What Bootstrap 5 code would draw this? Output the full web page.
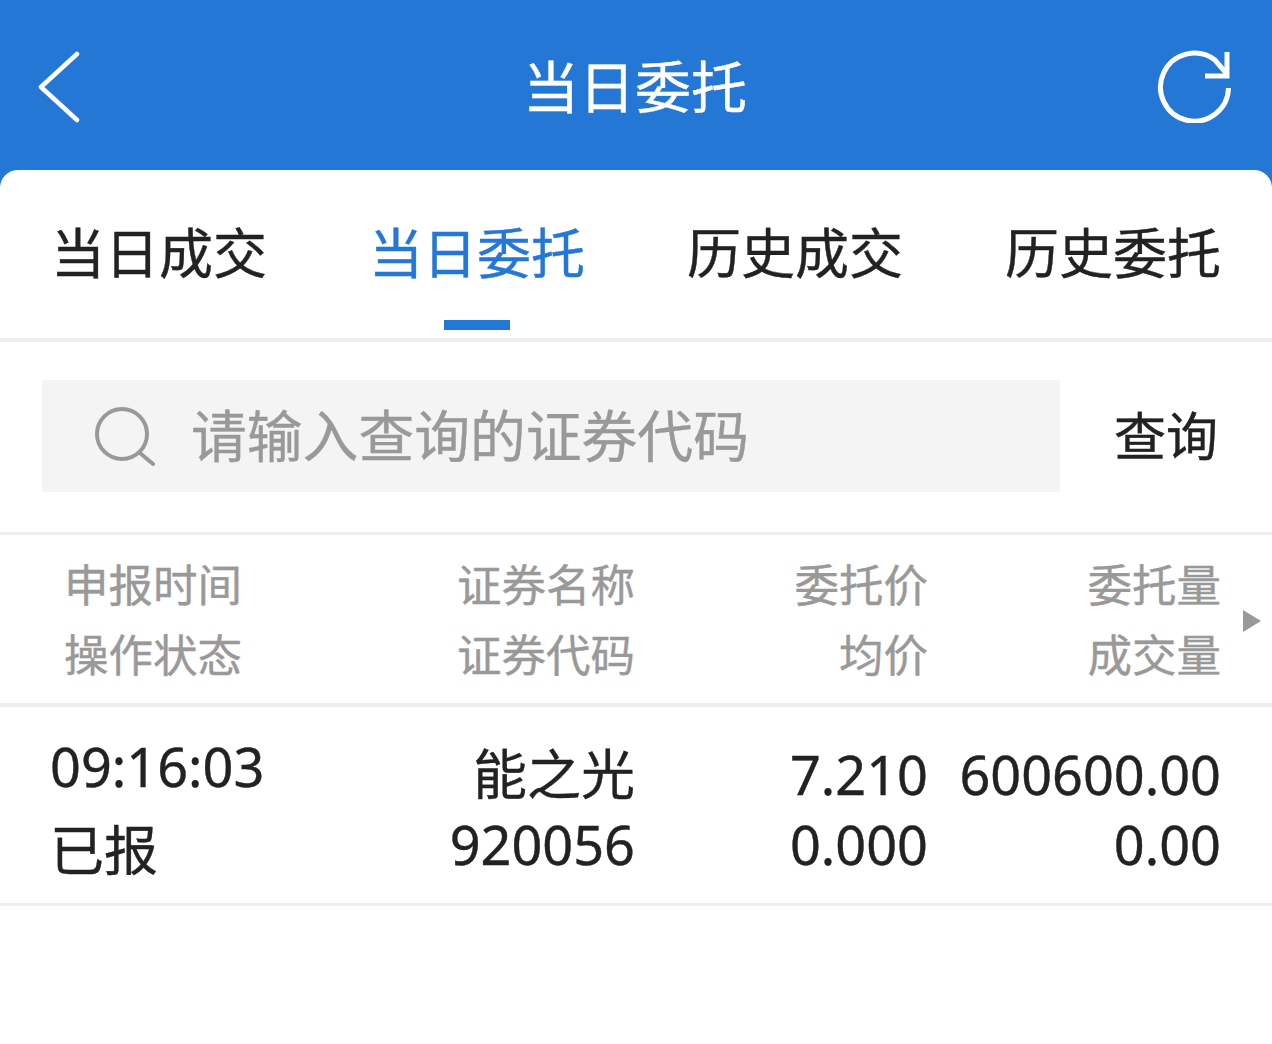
<!DOCTYPE html>
<html lang="zh">
<head>
<meta charset="utf-8">
<title>当日委托</title>
<link href="https://cdn.jsdelivr.net/npm/bootstrap@5.3.0/dist/css/bootstrap.min.css" rel="stylesheet">
<style>
html,body{height:100%;}
body{background:#fff;font-family:"Noto Sans","Noto Sans CJK SC",sans-serif;overflow:hidden;-webkit-text-stroke:.4px currentColor;}
.app-top{height:186px;background:#2577d6;color:#fff;padding:0 40px 16px 38px;}
.top-side{width:76px;}
.back-mark{margin-top:4px;display:block;}
.app-title{font-size:56px;line-height:1;margin:1px 0 0;font-weight:400;flex:1 1 auto;text-align:center;}
.app-sheet{background:#fff;border-radius:18px 18px 0 0;margin-top:-16px;position:relative;}
.tab-strip{height:172px;border-bottom:4px solid #eeeeee;}
.tab-cell{flex:0 0 25%;text-align:center;font-size:54px;line-height:1;color:#222;padding-top:56px;position:relative;}
.tab-on{color:#2577d6;}
.tab-on::after{content:"";position:absolute;left:50%;margin-left:-33px;top:150px;width:66px;height:10px;background:#2577d6;}
.search-row{height:193px;padding:39px 0 42px 42px;border-bottom:3px solid #eeeeee;}
.search-box{width:1018px;height:112px;background:#f4f4f4;padding-left:52px;gap:35px;color:#999;font-size:55.8px;}
.search-go{font-size:52px;color:#222;width:212px;text-align:center;}
.data-grid{display:grid;grid-template-columns:635px 293px 293px;}
.head-row{height:172px;border-bottom:4px solid #eeeeee;color:#999;font-size:44.500px;line-height:70px;padding-top:15px;position:relative;}
.data-row{height:199px;border-bottom:3px solid #eeeeee;color:#222;font-size:54px;line-height:70px;padding-top:32px;}
.first-col{padding-left:64px;}
.data-row .first-col{padding-left:50px;}
.tail-col{text-align:right;}
.row-arrow{position:absolute;left:1243px;top:75px;width:18px;height:22px;-webkit-text-stroke:0;}
.time-line{line-height:70px;margin-top:-8px;}
.state-line{line-height:82px;margin-top:8px;}
</style>
</head>
<body>
<header class="app-top d-flex align-items-center">
  <div class="top-side"><svg class="back-mark" width="42" height="72" viewBox="0 0 42 72" fill="none" stroke="#fff" stroke-width="4.500" stroke-linecap="round" stroke-linejoin="round"><path d="M39 3 3 36l36 33"/></svg></div>
  <h1 class="app-title">当日委托</h1>
  <div class="top-side"><svg class="d-block" width="76" height="76" viewBox="0 0 76 76" fill="none" stroke="#fff" stroke-width="5"><path d="M72.500 41A34 34 0 1 1 59 13L71 27"/><path d="M71 5v24H49"/></svg></div>
</header>
<main class="app-sheet">
  <nav class="tab-strip d-flex">
    <div class="tab-cell">当日成交</div>
    <div class="tab-cell tab-on">当日委托</div>
    <div class="tab-cell">历史成交</div>
    <div class="tab-cell">历史委托</div>
  </nav>
  <section class="search-row d-flex align-items-center">
    <div class="search-box d-flex align-items-center">
      <svg width="62" height="60" viewBox="0 0 62 60" fill="none" stroke="#999" stroke-width="4" stroke-linecap="round"><circle cx="28" cy="28" r="25"/><path d="M46 47l13 11"/></svg>
      <span>请输入查询的证券代码</span>
    </div>
    <div class="search-go">查询</div>
  </section>
  <section class="head-row data-grid">
    <div class="d-flex justify-content-between">
      <div class="first-col">申报时间<br>操作状态</div>
      <div class="tail-col">证券名称<br>证券代码</div>
    </div>
    <div class="tail-col">委托价<br>均价</div>
    <div class="tail-col">委托量<br>成交量</div>
    <svg class="row-arrow" viewBox="0 0 18 22"><path d="M0 0l18 11L0 22z" fill="#999"/></svg>
  </section>
  <section class="data-row data-grid">
    <div class="d-flex justify-content-between">
      <div class="first-col"><div class="time-line">09:16:03</div><div class="state-line">已报</div></div>
      <div class="tail-col">能之光<br>920056</div>
    </div>
    <div class="tail-col">7.210<br>0.000</div>
    <div class="tail-col">600600.00<br>0.00</div>
  </section>
</main>
<script src="https://cdn.jsdelivr.net/npm/bootstrap@5.3.0/dist/js/bootstrap.bundle.min.js"></script>
</body>
</html>
